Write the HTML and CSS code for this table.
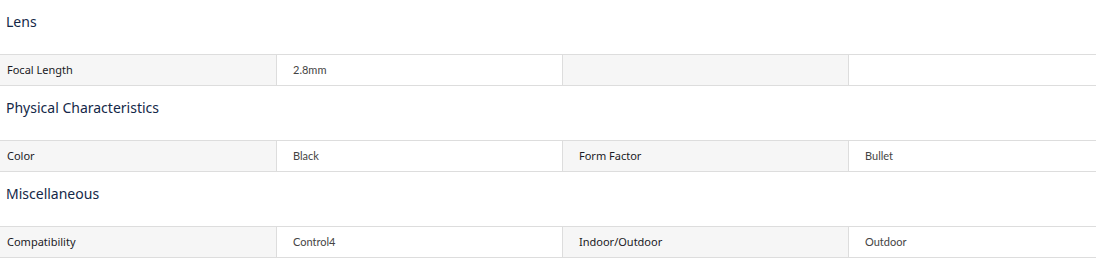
FILE: index.html
```html
<!DOCTYPE html>
<html>
<head>
<meta charset="utf-8">
<link rel="stylesheet" href="styles.css">
</head>
<body>
<div class="specs">
  <section class="group">
    <h3 class="group-title">Lens</h3>
    <div class="row">
      <div class="cell label first">Focal Length</div>
      <div class="cell value">2.8mm</div>
      <div class="cell label"></div>
      <div class="cell value"></div>
    </div>
  </section>
  <section class="group">
    <h3 class="group-title">Physical Characteristics</h3>
    <div class="row">
      <div class="cell label first">Color</div>
      <div class="cell value">Black</div>
      <div class="cell label">Form Factor</div>
      <div class="cell value">Bullet</div>
    </div>
  </section>
  <section class="group">
    <h3 class="group-title">Miscellaneous</h3>
    <div class="row">
      <div class="cell label first">Compatibility</div>
      <div class="cell value">Control4</div>
      <div class="cell label">Indoor/Outdoor</div>
      <div class="cell value">Outdoor</div>
    </div>
  </section>
</div>
</body>
</html>
```
FILE: styles.css
```css
html, body {
  margin: 0;
  padding: 0;
  background: #ffffff;
}
.specs {
  display: flex;
  flex-direction: column;
}
.group-title {
  margin: 0;
  height: 54px;
  box-sizing: border-box;
  padding: 13px 0 0 6px;
  font-family: "Noto Sans", "Open Sans", sans-serif;
  font-weight: 400;
  font-size: 14px;
  line-height: 18px;
  color: #142848;
}
.row {
  display: grid;
  grid-template-columns: 276px 286px 286px 1fr;
  border-top: 1px solid #dddddd;
  border-bottom: 1px solid #dddddd;
  height: 32px;
  box-sizing: border-box;
}
.cell {
  display: flex;
  align-items: center;
  padding-left: 16px;
  padding-bottom: 2px;
  font-size: 11px;
  border-left: 1px solid #dddddd;
}
.cell.first {
  border-left: none;
  padding-left: 7px;
}
.label {
  background: #f6f6f6;
  font-family: "Noto Sans", "Open Sans", sans-serif;
  font-weight: 400;
  color: #1a1a24;
}
.value {
  background: #ffffff;
  font-family: Lato, "Liberation Sans", sans-serif;
  color: #444444;
}
```
